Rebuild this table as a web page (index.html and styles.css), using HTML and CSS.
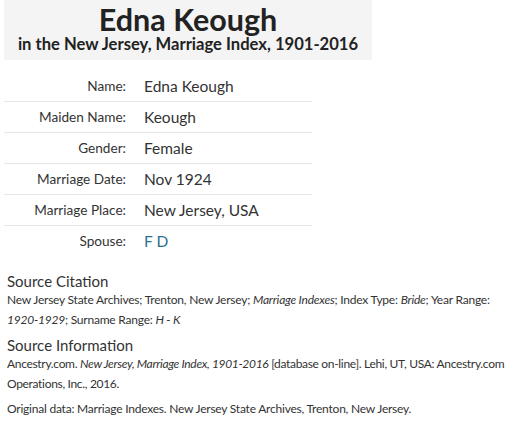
FILE: index.html
```html
<!DOCTYPE html>
<html>
<head>
<meta charset="utf-8">
<link rel="stylesheet" href="styles.css">
</head>
<body>
<div class="page">
  <header class="title-box">
    <h1 class="title">Edna Keough</h1>
    <h2 class="subtitle">in the New Jersey, Marriage Index, 1901-2016</h2>
  </header>
  <table class="facts">
    <tr><th>Name:</th><td>Edna Keough</td></tr>
    <tr><th>Maiden Name:</th><td>Keough</td></tr>
    <tr><th>Gender:</th><td>Female</td></tr>
    <tr><th>Marriage Date:</th><td>Nov 1924</td></tr>
    <tr><th>Marriage Place:</th><td>New Jersey, USA</td></tr>
    <tr><th>Spouse:</th><td><a class="link" href="#">F D</a></td></tr>
  </table>
  <section class="source first">
    <h3 class="source-head">Source Citation</h3>
    <p class="source-text">New Jersey State Archives; Trenton, New Jersey; <i>Marriage Indexes</i>; Index Type: <i>Bride</i>; Year Range: <i>1920-1929</i>; Surname Range: <i>H - K</i></p>
  </section>
  <section class="source">
    <h3 class="source-head">Source Information</h3>
    <p class="source-text tight">Ancestry.com. <i>New Jersey, Marriage Index, 1901-2016</i> [database on-line]. Lehi, UT, USA: Ancestry.com Operations, Inc., 2016.</p>
    <p class="source-text note">Original data: Marriage Indexes. New Jersey State Archives, Trenton, New Jersey.</p>
  </section>
</div>
</body>
</html>
```
FILE: styles.css
```css
html, body { margin: 0; padding: 0; background: #fff; }
body {
  font-family: "Lato", "Open Sans", sans-serif;
  color: #333;
}
.page { padding: 0 0 0 4px; }
.title-box {
  width: 368px;
  background: #f4f4f4;
  text-align: center;
  padding: 4px 0 6px;
  box-sizing: border-box;
  height: 60px;
}
.title {
  margin: 0;
  font-size: 30.5px;
  line-height: 30px;
  font-weight: 700;
  color: #222;
}
.subtitle {
  margin: 0;
  font-size: 16.6px;
  line-height: 20px;
  font-weight: 700;
  color: #222;
}
.facts {
  margin-top: 11px;
  width: 308px;
  border-collapse: collapse;
}
.facts th, .facts td {
  height: 30px;
  padding: 0;
  vertical-align: middle;
}
.facts tr { border-bottom: 1px solid #e6e6e6; }
.facts tr:last-child { border-bottom: none; }
.facts th {
  width: 122px;
  text-align: right;
  font-weight: 400;
  font-size: 13.6px;
  color: #333;
  padding-right: 18px;
}
.facts td {
  font-size: 15.5px;
  color: #333;
}
.link { color: #2b6f93; text-decoration: none; }
.source { padding: 0 0 0 3px; margin-top: 7px; }
.source.first { margin-top: 16px; }
.source-head {
  margin: 0;
  font-size: 15px;
  line-height: 18px;
  font-weight: 400;
  color: #333;
}
.source-text {
  margin: 0;
  font-size: 12px;
  letter-spacing: -0.22px;
  line-height: 19.5px;
  color: #333;
}
.source-text.tight { letter-spacing: -0.32px; }
.note { margin-top: 6px; }
```
